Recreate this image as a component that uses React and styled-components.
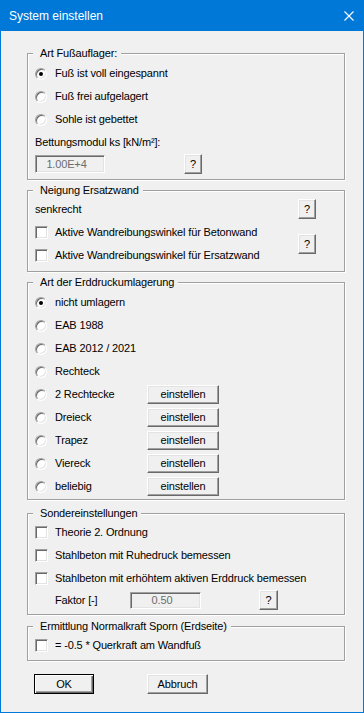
import React from 'react';
import styled, { createGlobalStyle } from 'styled-components';

const GlobalStyle = createGlobalStyle`
  html, body {
    margin: 0;
    padding: 0;
    background: #ffffff;
  }
`;

const Window = styled.div`
  width: 364px;
  height: 713px;
  box-sizing: border-box;
  border: 1px solid #0078d7;
  background: #f0f0f0;
  display: flex;
  flex-direction: column;
  font: 11px/13px "Liberation Sans", Arial, sans-serif;
  letter-spacing: -0.15px;
  color: #000;
`;

const TitleBar = styled.div`
  flex: none;
  height: 30px;
  background: #0078d7;
  color: #fff;
  display: flex;
  align-items: center;
  justify-content: space-between;
  padding: 0 9px 0 8px;
  font-size: 12px;
  letter-spacing: 0;
`;

const Body = styled.div`
  padding: 15px 0 0 26px;
  display: flex;
  flex-direction: column;
`;

const Group = styled.fieldset`
  width: 318px;
  box-sizing: border-box;
  min-width: 0;
  margin: ${p => p.$mt ?? 3}px 0 0;
  padding: ${p => p.$pt}px 0 ${p => p.$pb}px 7px;
  border: 1px solid #a0a0a0;
  box-shadow: 1px 1px 0 #fff, inset 1px 1px 0 #fff;
`;

const Legend = styled.legend`
  margin-left: -2px;
  padding: 0 4px 0 7px;
  line-height: 14px;
  background: #f0f0f0;
`;

const Row = styled.div`
  display: flex;
  align-items: center;
  height: ${p => p.$h ?? 23}px;
`;

const Slot = styled.span`
  flex: none;
  width: 20px;
  display: flex;
  align-items: center;
`;

const Radio = styled.span`
  width: 12px;
  height: 12px;
  box-sizing: border-box;
  border-radius: 50%;
  background: #fff;
  border: 1px solid;
  border-color: #a0a0a0 #fff #fff #a0a0a0;
  box-shadow: inset 1px 1px 0 #696969, inset -1px -1px 0 #e3e3e3;
  position: relative;

  &::after {
    content: '';
    display: ${p => (p.$checked ? 'block' : 'none')};
    position: absolute;
    left: 3px;
    top: 3px;
    width: 4px;
    height: 4px;
    border-radius: 50%;
    background: #000;
  }
`;

const Check = styled.span`
  width: 13px;
  height: 13px;
  box-sizing: border-box;
  background: #fff;
  border: 1px solid;
  border-color: #a0a0a0 #fff #fff #a0a0a0;
  box-shadow: inset 1px 1px 0 #696969, inset -1px -1px 0 #e3e3e3;
`;

const Label = styled.span`
  flex: none;
  width: ${p => (p.$w ? `${p.$w}px` : 'auto')};
  white-space: nowrap;
`;

const Btn = styled.button`
  flex: none;
  width: ${p => p.$w}px;
  height: ${p => p.$h ?? 19}px;
  margin-left: ${p => p.$ml ?? 0}px;
  box-sizing: border-box;
  padding: 0;
  font: inherit;
  letter-spacing: inherit;
  color: #000;
  background: #f0f0f0;
  border: 1px solid;
  border-color: ${p => (p.$default ? '#000' : '#fff #696969 #696969 #fff')};
  box-shadow: ${p =>
    p.$default
      ? 'inset 1px 1px 0 #fff, inset -1px -1px 0 #696969, inset -2px -2px 0 #a0a0a0'
      : 'inset -1px -1px 0 #a0a0a0, inset 1px 1px 0 #e3e3e3'};
`;

const Field = styled.div`
  flex: none;
  width: ${p => p.$w}px;
  height: ${p => p.$h ?? 18}px;
  margin-left: ${p => p.$ml ?? 0}px;
  box-sizing: border-box;
  border: 1px solid;
  border-color: #a0a0a0 #fff #fff #a0a0a0;
  box-shadow: inset 1px 1px 0 #696969, inset -1px -1px 0 #e3e3e3;
  background: #f0f0f0;
  color: #6d6d6d;
  display: flex;
  align-items: center;
  justify-content: center;
  padding-right: 7px;
`;

const SlopeGrid = styled.div`
  display: grid;
  grid-template-columns: 1fr 18px;
  grid-template-rows: 24px 23px 23px;
  padding-right: 28px;
  align-items: center;
`;

const HelpCell = styled.div`
  grid-column: 2;
  grid-row: ${p => p.$row};
  display: flex;
  align-items: center;
`;

const Footer = styled.div`
  display: flex;
  margin: 13px 0 0 7px;
  gap: 53px;
`;

const CloseIcon = () => (
  <svg width="10" height="10" viewBox="0 0 10 10">
    <path d="M0.5 0.5 L9.5 9.5 M9.5 0.5 L0.5 9.5" stroke="#fff" strokeWidth="1.1" fill="none" />
  </svg>
);

const RadioRow = ({ checked, children, button }) => (
  <Row>
    <Slot><Radio $checked={checked} /></Slot>
    <Label $w={button ? 92 : 0}>{children}</Label>
    {button && <Btn $w={72}>einstellen</Btn>}
  </Row>
);

const CheckRow = ({ children }) => (
  <Row>
    <Slot><Check /></Slot>
    <Label>{children}</Label>
  </Row>
);

const redistribution = [
  ['nicht umlagern', true, false],
  ['EAB 1988', false, false],
  ['EAB 2012 / 2021', false, false],
  ['Rechteck', false, false],
  ['2 Rechtecke', false, true],
  ['Dreieck', false, true],
  ['Trapez', false, true],
  ['Viereck', false, true],
  ['beliebig', false, true],
];

export default function App() {
  return (
    <>
      <GlobalStyle />
      <Window>
        <TitleBar>
          <span>System einstellen</span>
          <CloseIcon />
        </TitleBar>
        <Body>
          <Group $mt={0} $pt={2} $pb={5}>
            <Legend>Art Fußauflager:</Legend>
            <RadioRow checked>Fuß ist voll eingespannt</RadioRow>
            <RadioRow>Fuß frei aufgelagert</RadioRow>
            <RadioRow>Sohle ist gebettet</RadioRow>
            <Row>Bettungsmodul ks [kN/m²]:</Row>
            <Row $h={20}>
              <Field $w={70}>1.00E+4</Field>
              <Btn $w={18} $h={20} $ml={79}>?</Btn>
            </Row>
          </Group>

          <Group $pt={0} $pb={4}>
            <Legend>Neigung Ersatzwand</Legend>
            <SlopeGrid>
              <Row $h={24}>senkrecht</Row>
              <HelpCell $row={1}><Btn $w={18} $h={20}>?</Btn></HelpCell>
              <CheckRow>Aktive Wandreibungswinkel für Betonwand</CheckRow>
              <CheckRow>Aktive Wandreibungswinkel für Ersatzwand</CheckRow>
              <HelpCell $row="2 / 4"><Btn $w={18} $h={20}>?</Btn></HelpCell>
            </SlopeGrid>
          </Group>

          <Group $pt={2} $pb={1}>
            <Legend>Art der Erddruckumlagerung</Legend>
            {redistribution.map(([text, checked, button]) => (
              <RadioRow key={text} checked={checked} button={button}>{text}</RadioRow>
            ))}
          </Group>

          <Group $mt={6} $pt={1} $pb={4}>
            <Legend>Sondereinstellungen</Legend>
            <CheckRow>Theorie 2. Ordnung</CheckRow>
            <CheckRow>Stahlbeton mit Ruhedruck bemessen</CheckRow>
            <CheckRow>Stahlbeton mit erhöhtem aktiven Erddruck bemessen</CheckRow>
            <Row $h={20}>
              <Slot />
              <Label $w={75}>Faktor [-]</Label>
              <Field $w={71} $h={17}>0.50</Field>
              <Btn $w={19} $h={20} $ml={58}>?</Btn>
            </Row>
          </Group>

          <Group $mt={4} $pt={1} $pb={3}>
            <Legend>Ermittlung Normalkraft Sporn (Erdseite)</Legend>
            <CheckRow>= -0.5 * Querkraft am Wandfuß</CheckRow>
          </Group>

          <Footer>
            <Btn $default $w={60} $h={20}>OK</Btn>
            <Btn $w={61} $h={20}>Abbruch</Btn>
          </Footer>
        </Body>
      </Window>
    </>
  );
}
